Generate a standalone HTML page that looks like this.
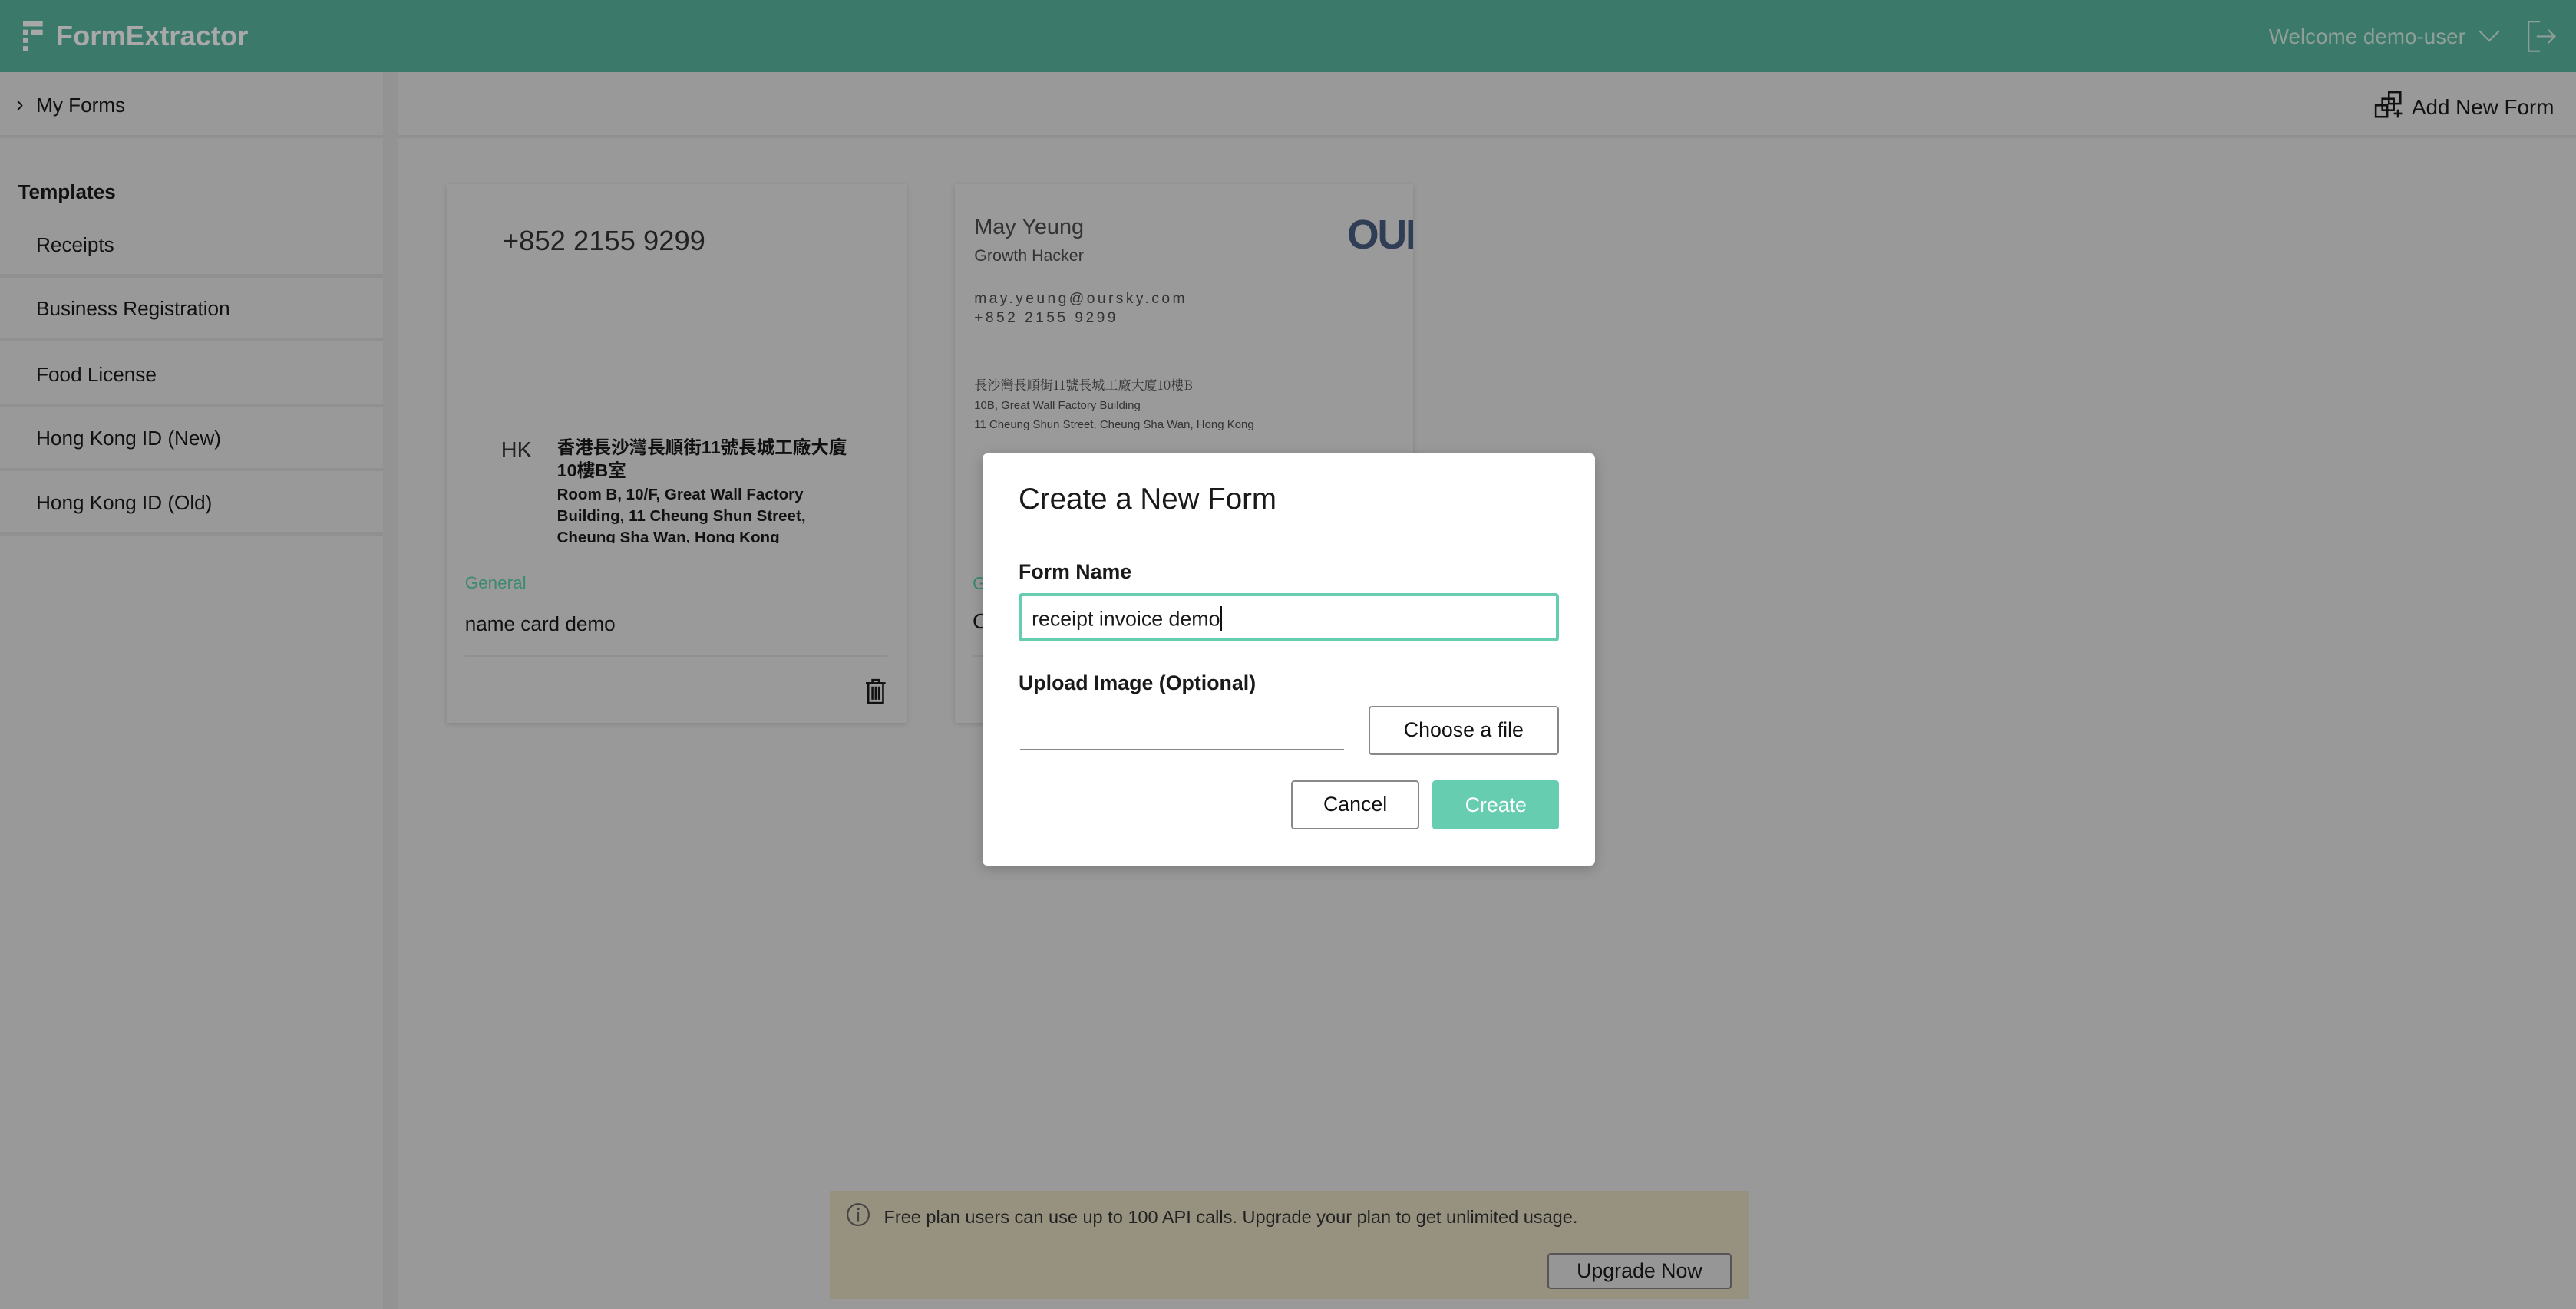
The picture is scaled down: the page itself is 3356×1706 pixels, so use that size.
<!DOCTYPE html>
<html><head><meta charset="utf-8"><style>
html,body{margin:0;padding:0;width:3356px;height:1706px;overflow:hidden;background:#999;}
#w{zoom:2.14031;width:1568px;height:797px;position:relative;font-family:"Liberation Sans","Noto Sans CJK TC",sans-serif;color:#111;}
.a{position:absolute;white-space:nowrap;}
.hd{left:0;top:0;width:1568px;height:44px;background:#3b7a6b;}
.sb{left:0;top:44px;width:233px;height:753px;background:#999;}
.sep{left:233px;top:44px;width:9px;height:753px;background:#939393;}
.hl{height:2px;background:#909090;}
.item{font-size:12.2px;left:22px;}
.card{background:#9a9a9a;box-shadow:0 1px 3px rgba(0,0,0,.15);}
</style></head><body><div id="w">
<div class="a hd"></div>
<svg class="a" style="left:14px;top:13px" width="13" height="19"><g fill="#a8a8a8"><rect x="0" y="0" width="12" height="3"/><rect x="0" y="5" width="3" height="3"/><rect x="5" y="5" width="7" height="3"/><rect x="0" y="10" width="3" height="3"/><rect x="0" y="15" width="3" height="3"/></g></svg>
<div class="a" style="left:34px;top:12px;font-size:17px;font-weight:bold;color:#a9a9a9">FormExtractor</div>
<div class="a" style="left:1381px;top:15px;font-size:13px;color:#8f9f98">Welcome demo-user</div>
<svg class="a" style="left:1508px;top:17px" width="14" height="10"><path d="M1 2 L7 8 L13 2" fill="none" stroke="#8f9f98" stroke-width="1"/></svg>
<svg class="a" style="left:1538px;top:12px" width="18" height="20"><path d="M8 1 H1 V19 H8 M6 10 H17 M13 6 L17 10 L13 14" fill="none" stroke="#8f9f98" stroke-width="1"/></svg>

<div class="a sb"></div>
<div class="a sep"></div>
<div class="a" style="left:10px;top:56px;font-size:13px">›</div>
<div class="a item" style="top:57px">My Forms</div>
<div class="a hl" style="left:0;top:82px;width:233px"></div>
<div class="a hl" style="left:242px;top:82px;width:1326px"></div>
<div class="a" style="left:11px;top:110px;font-size:12.2px;font-weight:bold">Templates</div>
<div class="a item" style="top:142px">Receipts</div>
<div class="a hl" style="left:0;top:167px;width:233px"></div>
<div class="a item" style="top:181px">Business Registration</div>
<div class="a hl" style="left:0;top:206px;width:233px"></div>
<div class="a item" style="top:221px">Food License</div>
<div class="a hl" style="left:0;top:246px;width:233px"></div>
<div class="a item" style="top:260px">Hong Kong ID (New)</div>
<div class="a hl" style="left:0;top:285px;width:233px"></div>
<div class="a item" style="top:299px">Hong Kong ID (Old)</div>
<div class="a hl" style="left:0;top:324px;width:233px"></div>

<svg class="a" style="left:1445px;top:55px" width="18" height="17"><g fill="none" stroke="#111" stroke-width="1.2"><rect x="1" y="9" width="7" height="7"/><rect x="5" y="5" width="7" height="7"/><rect x="9" y="1" width="7" height="7"/></g><path d="M12 14 h5 M14.5 11.5 v5" stroke="#111" stroke-width="1.2"/></svg>
<div class="a" style="left:1468px;top:58px;font-size:13px">Add New Form</div>

<div class="a card" style="left:272px;top:112px;width:280px;height:328px"></div>
<div class="a" style="left:306px;top:137px;font-size:17px;color:#222">+852 2155 9299</div>
<div class="a" style="left:305px;top:267px;font-size:13.5px;color:#222">HK</div>
<div class="a" style="left:339px;top:266px;font-size:11px;font-weight:bold;line-height:14px;color:#111">香港長沙灣長順街11號長城工廠大廈<br>10樓B室</div>
<div class="a" style="left:339px;top:295px;font-size:9.6px;font-weight:bold;line-height:13px;color:#111;height:36px;overflow:hidden">Room B, 10/F, Great Wall Factory<br>Building, 11 Cheung Shun Street,<br>Cheung Sha Wan, Hong Kong</div>
<div class="a" style="left:283px;top:349px;font-size:10.5px;color:#3c8a70">General</div>
<div class="a" style="left:283px;top:373px;font-size:12.2px">name card demo</div>
<div class="a hl" style="left:283px;top:399px;width:257px;height:1px"></div>
<svg class="a" style="left:527px;top:413px" width="12" height="16"><g fill="none" stroke="#111" stroke-width="1.2"><path d="M0 3 H12 M4 3 V1 H8 V3"/><rect x="1.5" y="3" width="9" height="12"/><path d="M4 5 V13 M6 5 V13 M8 5 V13"/></g></svg>

<div class="a card" style="left:581px;top:112px;width:279px;height:328px;overflow:hidden">
<div class="a" style="left:12px;top:19px;font-size:13.5px;color:#333">May Yeung</div>
<div class="a" style="left:12px;top:38px;font-size:10px;color:#333">Growth Hacker</div>
<div class="a" style="left:12px;top:64px;font-size:9px;letter-spacing:1.6px;color:#333;line-height:12px">may.yeung@oursky.com<br>+852 2155 9299</div>
<div class="a" style="left:239px;top:17px;font-size:25px;font-weight:bold;color:#2f3d55;letter-spacing:-1px">OUR</div>
<div class="a" style="left:12px;top:116px;font-size:8px;color:#333;font-family:'Noto Serif CJK SC',serif">長沙灣長順街11號長城工廠大廈10樓B</div>
<div class="a" style="left:12px;top:129px;font-size:7px;color:#333;line-height:12px">10B, Great Wall Factory Building<br>11 Cheung Shun Street, Cheung Sha Wan, Hong Kong</div>
<div class="a" style="left:11px;top:237px;font-size:11px;color:#3c8a70">G</div>
<div class="a" style="left:11px;top:259px;font-size:13px">C</div>
<div class="a hl" style="left:11px;top:287px;width:257px;height:1px"></div>
</div>

<div class="a" style="left:598px;top:276px;width:373px;height:251px;background:#fff;border-radius:3px;box-shadow:0 2px 8px rgba(0,0,0,.2)"></div>
<div class="a" style="left:620px;top:294px;font-size:18px;font-weight:500;color:#1a1a1a">Create a New Form</div>
<div class="a" style="left:620px;top:341px;font-size:12.5px;font-weight:bold;color:#1a1a1a">Form Name</div>
<div class="a" style="left:620px;top:361px;width:325px;height:26px;border:2px solid #66cdb0;border-radius:2px"></div>
<div class="a" style="left:628px;top:369px;font-size:12.5px;color:#1a1a1a">receipt invoice demo<span style="display:inline-block;width:1px;height:15px;background:#111;vertical-align:-3px"></span></div>
<div class="a" style="left:620px;top:409px;font-size:12.5px;font-weight:bold;color:#1a1a1a">Upload Image (Optional)</div>
<div class="a" style="left:621px;top:456px;width:197px;height:1px;background:#888"></div>
<div class="a" style="left:833px;top:430px;width:114px;height:28px;border:1px solid #888;border-radius:2px;font-size:12.5px;text-align:center;line-height:28px;color:#111">Choose a file</div>
<div class="a" style="left:786px;top:475px;width:76px;height:28px;border:1px solid #888;border-radius:2px;font-size:12.5px;text-align:center;line-height:28px;color:#111">Cancel</div>
<div class="a" style="left:872px;top:475px;width:77px;height:30px;background:#66cdb0;border-radius:2px;font-size:12.5px;text-align:center;line-height:30px;color:#fff">Create</div>

<div class="a" style="left:505px;top:725px;width:560px;height:66px;background:#979180"></div>
<svg class="a" style="left:515px;top:732px" width="15" height="15"><circle cx="7.5" cy="7.5" r="6.5" fill="none" stroke="#444" stroke-width="1"/><path d="M7.5 6 V11.5" stroke="#444"/><circle cx="7.5" cy="4" r=".8" fill="#444"/></svg>
<div class="a" style="left:538px;top:735px;font-size:11px;color:#222">Free plan users can use up to 100 API calls. Upgrade your plan to get unlimited usage.</div>
<div class="a" style="left:942px;top:763px;width:110px;height:20px;border:1px solid #555;border-radius:2px;background:#969696;font-size:12.5px;text-align:center;line-height:20px;color:#111">Upgrade Now</div>
</div></body></html>
